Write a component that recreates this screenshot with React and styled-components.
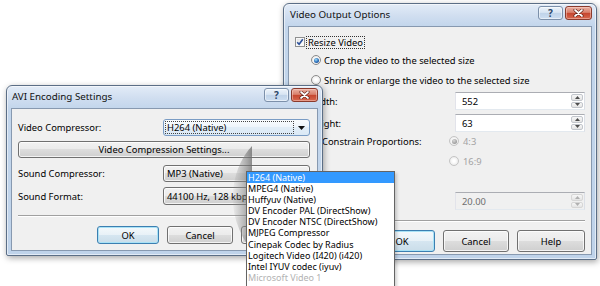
import React from "react";
import styled, { createGlobalStyle, css } from "styled-components";

const GlobalStyle = createGlobalStyle`
  html, body { margin: 0; padding: 0; background: #fff; }
  body { font-family: "Noto Sans", "Segoe UI", sans-serif; overflow: hidden; }
`;

const Stage = styled.div`
  position: relative;
  width: 600px;
  height: 286px;
  overflow: hidden;
  background: #fff;
`;

const Window = styled.div`
  position: absolute;
  left: ${(p) => p.$x}px;
  top: ${(p) => p.$y}px;
  width: ${(p) => p.$w}px;
  height: ${(p) => p.$h}px;
  z-index: ${(p) => p.$z};
  box-sizing: border-box;
  display: flex;
  flex-direction: column;
  border: 1px solid #5b6e86;
  border-radius: 6px 6px 2px 2px;
  background: linear-gradient(180deg, #e3ecf7 0px, #d0def0 12px, #c3d6ec 22px, #bfd3ea 100%);
  padding: 0 4px 4px;
  box-shadow: inset 0 0 0 1px rgba(255, 255, 255, 0.55), 1px 2px 6px rgba(0, 0, 0, 0.35);
`;

const TitleBar = styled.div`
  height: 22px;
  flex-shrink: 0;
  display: flex;
  align-items: flex-start;
`;

const TitleText = styled.div`
  flex: 1;
  font-size: 9.8px;
  line-height: 22px;
  padding-left: ${(p) => p.$pl}px;
  color: #111;
  white-space: nowrap;
`;

const CaptionButtons = styled.div`
  display: flex;
  gap: 2px;
  margin-top: 2px;
`;

const CaptionButton = styled.div`
  width: ${(p) => p.$w}px;
  height: 14px;
  box-sizing: border-box;
  border-radius: 3px;
  display: flex;
  align-items: center;
  justify-content: center;
  font-size: 10px;
  font-weight: 700;
  line-height: 1;
  ${(p) =>
    p.$close
      ? css`
          border: 1px solid #8a3a2c;
          background: linear-gradient(180deg, #eab0a2 0%, #d9806c 45%, #c6462f 52%, #d6684f 100%);
          box-shadow: inset 0 0 0 1px rgba(255, 220, 210, 0.45);
        `
      : css`
          border: 1px solid #7c90aa;
          color: #2b4669;
          background: linear-gradient(180deg, #edf3fa 0%, #d8e5f3 45%, #c0d3e9 52%, #cddef1 100%);
          box-shadow: inset 0 0 0 1px rgba(255, 255, 255, 0.5);
        `}
`;

const Client = styled.div`
  flex: 1;
  min-height: 0;
  background: #f0f0f0;
  border: 1px solid #8799b0;
  display: flex;
  flex-direction: column;
  padding-top: ${(p) => p.$pt}px;
  font-size: 9.4px;
  color: #000;
`;

const Row = styled.div`
  display: flex;
  align-items: center;
  flex-shrink: 0;
  height: ${(p) => p.$h}px;
  margin-top: ${(p) => p.$mt || 0}px;
  margin-left: ${(p) => p.$ml || 0}px;
  margin-right: ${(p) => p.$mr || 0}px;
  justify-content: ${(p) => (p.$end ? "flex-end" : "flex-start")};
  gap: ${(p) => p.$gap || 0}px;
`;

const Label = styled.span`
  display: flex;
  align-items: center;
  width: ${(p) => (p.$w ? `${p.$w}px` : "auto")};
  flex-shrink: 0;
  white-space: nowrap;
  color: ${(p) => (p.$disabled ? "#a3a3a3" : "#000")};
  gap: ${(p) => p.$gap || 0}px;
`;

const FocusText = styled.span`
  margin-left: 2px;
  padding: 0 1px;
  line-height: 11px;
  outline: 1px dotted #333;
  outline-offset: 0;
`;

const Box = styled.span`
  width: 10px;
  height: 10px;
  box-sizing: border-box;
  flex-shrink: 0;
  border: 1px solid #8e8f8f;
  background: linear-gradient(135deg, #dcdcdc 0%, #f6f6f6 60%, #ffffff 100%);
  box-shadow: inset 0 0 0 1px #f8f8f8;
  display: flex;
  align-items: center;
  justify-content: center;
`;

const RadioRing = styled.span`
  width: 10px;
  height: 10px;
  box-sizing: border-box;
  flex-shrink: 0;
  border-radius: 50%;
  border: 1px solid ${(p) => (p.$disabled ? "#c4c4c4" : "#8a8a8a")};
  background: radial-gradient(circle at 50% 50%, #ffffff 20%, #e3e3e3 100%);
  display: flex;
  align-items: center;
  justify-content: center;
`;

const RadioDot = styled.span`
  width: 5px;
  height: 5px;
  border-radius: 50%;
  background: ${(p) =>
    p.$disabled
      ? "radial-gradient(circle at 40% 35%, #d8d8d8, #9c9c9c 70%)"
      : "radial-gradient(circle at 40% 35%, #9fe0fb, #2a6cb8 55%, #163d78 100%)"};
`;

const TextField = styled.div`
  width: ${(p) => p.$w}px;
  height: 100%;
  box-sizing: border-box;
  border: 1px solid;
  border-color: #abadb3 #dbdfe6 #e3e9ef #e2e3ea;
  background: ${(p) => (p.$disabled ? "#f0f0f0" : "#fff")};
  color: ${(p) => (p.$disabled ? "#6f6f6f" : "#000")};
  display: flex;
  align-items: center;
  padding-left: 6px;
`;

const FieldValue = styled.span`
  flex: 1;
`;

const Spinner = styled.div`
  width: 12px;
  height: 100%;
  margin-right: 1px;
  display: flex;
  flex-direction: column;
  padding: 1px 0;
  box-sizing: border-box;
  gap: 1px;
`;

const SpinButton = styled.div`
  flex: 1;
  border: 1px solid ${(p) => (p.$disabled ? "#d6d6d6" : "#c2c6cc")};
  border-radius: 2px;
  background: linear-gradient(180deg, #f7f7f7, #e4e4e4);
  display: flex;
  align-items: center;
  justify-content: center;
`;

const Separator = styled.div`
  height: 2px;
  flex-shrink: 0;
  margin-top: ${(p) => p.$mt}px;
  margin-left: ${(p) => p.$ml}px;
  margin-right: ${(p) => p.$mr}px;
  border-top: 1px solid #a0a0a0;
  border-bottom: 1px solid #ffffff;
  box-sizing: border-box;
`;

const PushButton = styled.div`
  width: ${(p) => p.$w}px;
  height: 100%;
  box-sizing: border-box;
  flex-shrink: 0;
  border-radius: 3px;
  display: flex;
  align-items: center;
  justify-content: center;
  white-space: nowrap;
  ${(p) =>
    p.$default
      ? css`
          border: 1px solid #3c7fb1;
          background: linear-gradient(180deg, #f4f9fc 0%, #e8f1f7 49%, #d6e6f1 50%, #cadde9 100%);
          box-shadow: inset 0 0 0 1px #a9e2f6;
        `
      : css`
          border: 1px solid #707070;
          background: linear-gradient(180deg, #f2f2f2 0%, #ebebeb 49%, #dddddd 50%, #cfcfcf 100%);
          box-shadow: inset 0 0 0 1px rgba(255, 255, 255, 0.75);
        `}
`;

const Combo = styled.div`
  width: ${(p) => p.$w}px;
  height: 100%;
  box-sizing: border-box;
  flex-shrink: 0;
  border-radius: 3px;
  display: flex;
  align-items: center;
  ${(p) =>
    p.$focus
      ? css`
          border: 1px solid #7a9cc4;
          background: linear-gradient(180deg, #f9fcfe 0%, #eef5fb 49%, #e2eef8 50%, #dbe9f5 100%);
        `
      : css`
          border: 1px solid #707070;
          background: linear-gradient(180deg, #f2f2f2 0%, #ebebeb 49%, #dddddd 50%, #cfcfcf 100%);
          box-shadow: inset 0 0 0 1px rgba(255, 255, 255, 0.75);
        `}
`;

const ComboValue = styled.span`
  flex: 1;
  align-self: stretch;
  margin: 2px 0 2px 2px;
  padding-left: 1px;
  display: flex;
  align-items: center;
  white-space: nowrap;
  overflow: hidden;
  outline: ${(p) => (p.$focus ? "1px dotted #444" : "none")};
`;

const ComboArrow = styled.span`
  width: 16px;
  display: flex;
  align-items: center;
  justify-content: center;
`;

const DropList = styled.div`
  position: absolute;
  left: 246px;
  top: 171px;
  width: 149px;
  height: 130px;
  z-index: 5;
  box-sizing: border-box;
  background: #fff;
  border: 1px solid #646464;
  box-shadow: 2px 2px 3px rgba(0, 0, 0, 0.18);
  font-size: 9px;
`;

const DropItem = styled.div`
  height: 11.1px;
  line-height: 11.1px;
  padding-left: 1px;
  white-space: nowrap;
  ${(p) =>
    p.$selected &&
    css`
      background: #3399ff;
      color: #fff;
    `}
  ${(p) =>
    p.$faded &&
    css`
      color: #b2b2b2;
    `}
`;

const Wedge = styled.svg`
  position: absolute;
  left: 222px;
  top: 140px;
  z-index: 4;
`;

const Arrow = () => (
  <svg width="7" height="4" viewBox="0 0 7 4">
    <path d="M0 0 L7 0 L3.5 4 Z" fill="#111" />
  </svg>
);

const Tri = ({ up, disabled }) => (
  <svg width="5" height="3" viewBox="0 0 5 3">
    <path d={up ? "M0 3 L5 3 L2.5 0 Z" : "M0 0 L5 0 L2.5 3 Z"} fill={disabled ? "#b0b0b0" : "#4d4d4d"} />
  </svg>
);

const Checkmark = () => (
  <svg width="8" height="8" viewBox="0 0 8 8">
    <path d="M1.2 4.2 L3.1 6.3 L6.8 1.2" fill="none" stroke="#2a4f99" strokeWidth="1.6" />
  </svg>
);

const CloseGlyph = () => (
  <svg width="11" height="8" viewBox="0 0 11 8">
    <path d="M2 1 L9 7 M9 1 L2 7" stroke="#5a1d13" strokeWidth="3" strokeLinecap="round" />
    <path d="M2 1 L9 7 M9 1 L2 7" stroke="#ffffff" strokeWidth="1.7" strokeLinecap="round" />
  </svg>
);

const Caption = () => (
  <CaptionButtons>
    <CaptionButton $w={25}>?</CaptionButton>
    <CaptionButton $w={27} $close>
      <CloseGlyph />
    </CaptionButton>
  </CaptionButtons>
);

const CheckBox = ({ checked }) => <Box>{checked && <Checkmark />}</Box>;

const Radio = ({ checked, disabled }) => (
  <RadioRing $disabled={disabled}>{checked && <RadioDot $disabled={disabled} />}</RadioRing>
);

const NumberField = ({ value, disabled }) => (
  <TextField $w={130} $disabled={disabled}>
    <FieldValue>{value}</FieldValue>
    <Spinner>
      <SpinButton $disabled={disabled}>
        <Tri up disabled={disabled} />
      </SpinButton>
      <SpinButton $disabled={disabled}>
        <Tri disabled={disabled} />
      </SpinButton>
    </Spinner>
  </TextField>
);

const Select = ({ value, focus }) => (
  <Combo $w={147} $focus={focus}>
    <ComboValue $focus={focus}>{value}</ComboValue>
    <ComboArrow>
      <Arrow />
    </ComboArrow>
  </Combo>
);

const codecs = [
  "H264 (Native)",
  "MPEG4 (Native)",
  "Huffyuv (Native)",
  "DV Encoder PAL (DirectShow)",
  "DV Encoder NTSC (DirectShow)",
  "MJPEG Compressor",
  "Cinepak Codec by Radius",
  "Logitech Video (I420) (i420)",
  "Intel IYUV codec (iyuv)",
  "Microsoft Video 1",
];

export default function App() {
  return (
    <>
      <GlobalStyle />
      <Stage>
        <Window $x={283} $y={3} $w={314} $h={257} $z={2}>
          <TitleBar>
            <TitleText $pl={2}>Video Output Options</TitleText>
            <Caption />
          </TitleBar>
          <Client $pt={8}>
            <Row $h={14} $ml={6}>
              <CheckBox checked />
              <FocusText>Resize Video</FocusText>
            </Row>
            <Row $h={14} $mt={4} $ml={22} $gap={3}>
              <Radio checked />
              <Label>Crop the video to the selected size</Label>
            </Row>
            <Row $h={14} $mt={6} $ml={22} $gap={3}>
              <Radio />
              <Label>Shrink or enlarge the video to the selected size</Label>
            </Row>
            <Row $h={18} $mt={5} $ml={20}>
              <Label $w={146}>Width:</Label>
              <NumberField value="552" />
            </Row>
            <Row $h={18} $mt={4} $ml={20}>
              <Label $w={146}>Height:</Label>
              <NumberField value="63" />
            </Row>
            <Row $h={14} $mt={2} $ml={20}>
              <Label $w={140} $gap={3}>
                <CheckBox checked />
                Constrain Proportions:
              </Label>
              <Label $gap={4} $disabled>
                <Radio checked disabled />
                4:3
              </Label>
            </Row>
            <Row $h={14} $mt={6} $ml={160}>
              <Label $gap={4} $disabled>
                <Radio disabled />
                16:9
              </Label>
            </Row>
            <Row $h={18} $mt={24} $ml={166}>
              <NumberField value="20.00" disabled />
            </Row>
            <Separator $mt={10} $ml={6} $mr={6} />
            <Row $h={22} $mt={8} $mr={6} $end $gap={8}>
              <PushButton $w={66} $default>
                OK
              </PushButton>
              <PushButton $w={66}>Cancel</PushButton>
              <PushButton $w={68}>Help</PushButton>
            </Row>
          </Client>
        </Window>

        <Window $x={6} $y={85} $w={317} $h={171} $z={3}>
          <TitleBar>
            <TitleText $pl={1}>AVI Encoding Settings</TitleText>
            <Caption />
          </TitleBar>
          <Client $pt={10}>
            <Row $h={17} $ml={6}>
              <Label $w={145}>Video Compressor:</Label>
              <Select value="H264 (Native)" focus />
            </Row>
            <Row $h={17} $mt={5} $ml={6}>
              <PushButton $w={292}>Video Compression Settings...</PushButton>
            </Row>
            <Row $h={17} $mt={7} $ml={6}>
              <Label $w={145}>Sound Compressor:</Label>
              <Select value="MP3 (Native)" />
            </Row>
            <Row $h={18} $mt={5} $ml={6}>
              <Label $w={145}>Sound Format:</Label>
              <Select value="44100 Hz, 128 kbps" />
            </Row>
            <Separator $mt={10} $ml={6} $mr={6} />
            <Row $h={18} $mt={9} $mr={10} $end $gap={8}>
              <PushButton $w={62} $default>
                OK
              </PushButton>
              <PushButton $w={66}>Cancel</PushButton>
              <PushButton $w={66} />
            </Row>
          </Client>
        </Window>

        <Wedge width="30" height="110" viewBox="0 0 30 110">
          <defs>
            <linearGradient id="wedgeShade" x1="0" y1="0" x2="1" y2="0">
              <stop offset="0" stopColor="#8a8a8a" stopOpacity="0.05" />
              <stop offset="0.5" stopColor="#858585" stopOpacity="0.45" />
              <stop offset="1" stopColor="#6a6a6a" stopOpacity="0.75" />
            </linearGradient>
          </defs>
          <path d="M30 6 C12 25, 0 65, 25 104 L25 31 L30 31 Z" fill="url(#wedgeShade)" />
        </Wedge>

        <DropList>
          {codecs.map((c, i) => (
            <DropItem key={c} $selected={i === 0} $faded={i === codecs.length - 1}>
              {c}
            </DropItem>
          ))}
        </DropList>
      </Stage>
    </>
  );
}
